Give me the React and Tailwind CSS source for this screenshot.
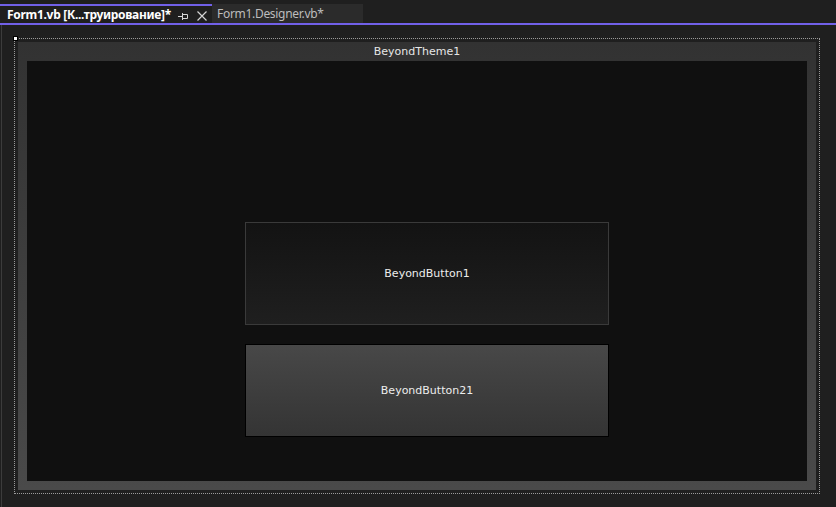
const PinIcon = () => (
  <svg width="10" height="9" viewBox="0 0 10 9" fill="none" stroke="#d4d4d4" strokeWidth="1">
    <path d="M0 4.5h4" />
    <path d="M4.5 1v7" />
    <path d="M4.5 2.5h5v4h-5" />
  </svg>
)

const CloseIcon = () => (
  <svg width="10" height="10" viewBox="0 0 10 10" fill="none" stroke="#d4d4d4" strokeWidth="1.2">
    <path d="M0.5 0.5l9 9M9.5 0.5l-9 9" />
  </svg>
)

const App = () => {
  return (
    <div className="w-[836px] h-[507px] bg-[#1f1f1f] flex flex-col overflow-hidden" style={{ fontFamily: '"Noto Sans", "Open Sans", sans-serif' }}>
      {/* Document tabs */}
      <div className="h-[23px] pt-[4px] flex items-stretch">
        <div className="w-[212px] border-t-2 border-[#7160e8] bg-[#1f1f1f] flex items-center pl-[7px] pr-[5px] pt-[1px]">
          <span className="text-[12px] font-bold text-white leading-none tracking-[-0.3px] whitespace-nowrap">Form1.vb [К...труирование]*</span>
          <div className="ml-auto flex items-center gap-[9px] pt-[2px]">
            <PinIcon />
            <CloseIcon />
          </div>
        </div>
        <div className="w-[151px] bg-[#2b2b2b] flex items-center pl-[5px]">
          <span className="text-[12px] text-[#bdbdbd] leading-none tracking-[-0.3px] whitespace-nowrap">Form1.Designer.vb*</span>
        </div>
      </div>
      <div className="h-[2px] bg-[#7160e8]" />

      {/* Designer surface */}
      <div className="flex-1 ml-[1px] border-l border-[#3c3c3c] pl-[12px] pt-[13px]">
        <div className="relative w-[806px] h-[456px] border border-dotted border-[#9a9a9a] p-[3px]">
          <div className="absolute -left-[2px] -top-[3px] w-[5px] h-[5px] bg-white border border-black" />

          {/* BeyondTheme form */}
          <div className="w-[798px] h-[448px] bg-gradient-to-b from-[#323232] to-[#4a4a4a] flex flex-col px-[9px] pb-[9px]">
            <div className="h-[19px] pt-[1px] flex items-center justify-center text-[11px] text-[#e6e6e6]" style={{ fontFamily: '"DejaVu Sans", sans-serif' }}>
              BeyondTheme1
            </div>
            <div className="flex-1 bg-[#101010] flex flex-col pt-[161px] pl-[218px] gap-[19px]" style={{ fontFamily: '"DejaVu Sans", sans-serif' }}>
              <div className="w-[364px] h-[103px] pt-[2px] border border-[#3a3a3a] bg-gradient-to-b from-[#131313] to-[#1f1f1f] flex items-center justify-center text-[11px] text-[#ededed]">
                BeyondButton1
              </div>
              <div className="w-[364px] h-[93px] pt-[2px] border border-black bg-gradient-to-b from-[#484848] to-[#343434] flex items-center justify-center text-[11px] text-[#ededed]">
                BeyondButton21
              </div>
            </div>
          </div>
        </div>
      </div>
    </div>
  )
}

export default App
